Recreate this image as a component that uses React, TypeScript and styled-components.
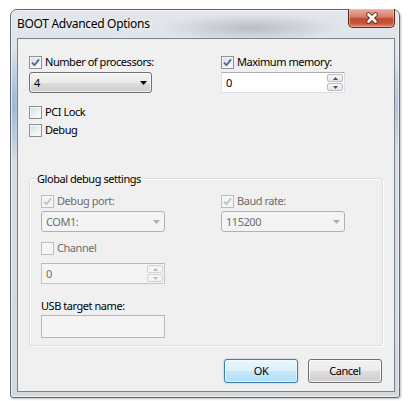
import React from "react";
import styled, { createGlobalStyle } from "styled-components";

const Global = createGlobalStyle`
  html, body { margin: 0; padding: 0; background: #ffffff; }
  body {
    font-family: "Noto Sans", "Open Sans", sans-serif;
    font-size: 11px;
    letter-spacing: -0.45px;
    color: #000;
  }
  #root { width: 417px; height: 401px; overflow: hidden; }
`;

const Window = styled.div`
  margin: 9px 0 0 10px;
  width: 390px;
  height: 389px;
  box-sizing: border-box;
  border: 1px solid #60676f;
  border-radius: 7px 7px 3px 3px;
  background:
    radial-gradient(ellipse 90px 14px at 62% 18px, rgba(110, 118, 128, 0.35), transparent 100%),
    radial-gradient(ellipse 8px 60px at 3px 95px, rgba(70, 130, 200, 0.45), transparent 100%),
    radial-gradient(ellipse 6px 50px at 386px 95px, rgba(90, 140, 200, 0.35), transparent 100%),
    linear-gradient(to bottom, #e2e6ea 0%, #d9dee3 40%, #d4d9de 100%);
  box-shadow: inset 0 0 0 1px rgba(255, 255, 255, 0.55), 1px 1px 2px rgba(0, 0, 0, 0.25);
  display: flex;
  flex-direction: column;
`;

const TitleBar = styled.div`
  height: 28px;
  display: flex;
  align-items: flex-start;
  padding-left: 6px;
  padding-right: 4px;
`;

const TitleText = styled.div`
  margin-top: 6px;
  font-size: 12px;
  line-height: 16px;
  letter-spacing: -0.3px;
  color: #000;
  text-shadow: 0 0 6px rgba(255, 255, 255, 0.9);
`;

const CloseButton = styled.div`
  margin-left: auto;
  margin-top: -1px;
  width: 47px;
  height: 19px;
  box-sizing: border-box;
  border: 1px solid #5a2a20;
  border-top: none;
  border-radius: 0 0 5px 5px;
  background: linear-gradient(
    to bottom,
    #e9ab9c 0%,
    #d9806b 42%,
    #c24a30 55%,
    #c9553a 80%,
    #de8a70 100%
  );
  box-shadow: inset 0 0 0 1px rgba(255, 210, 200, 0.45);
  display: flex;
  align-items: center;
  justify-content: center;
`;

const Client = styled.div`
  flex: 1;
  margin: 0 4px 5px 6px;
  border: 1px solid #7d838b;
  background: #f0f0f0;
  padding: 15px 11px 0 11px;
  display: flex;
  flex-direction: column;
`;

const Pair = styled.div<{ $first: number; $top?: number }>`
  display: grid;
  grid-template-columns: ${(p) => p.$first}px 124px;
  justify-items: start;
  row-gap: 2px;
  margin-top: ${(p) => p.$top ?? 0}px;
`;

const Stack = styled.div<{ $gap?: number; $top?: number }>`
  display: flex;
  flex-direction: column;
  align-items: flex-start;
  gap: ${(p) => p.$gap ?? 2}px;
  margin-top: ${(p) => p.$top ?? 0}px;
`;

const CheckRow = styled.div<{ $disabled?: boolean }>`
  height: 16px;
  display: flex;
  align-items: center;
  gap: 3px;
  line-height: 16px;
  color: ${(p) => (p.$disabled ? "#6d6d6d" : "#000")};
`;

const Box = styled.span<{ $disabled?: boolean }>`
  width: 13px;
  height: 13px;
  box-sizing: border-box;
  flex: none;
  border: 1px solid ${(p) => (p.$disabled ? "#bcbcbc" : "#8e8f8f")};
  background: ${(p) =>
    p.$disabled
      ? "#f4f4f4"
      : "linear-gradient(135deg, #d6dadf 0%, #eeeff1 55%, #fbfbfb 100%)"};
  box-shadow: inset 0 0 0 1px ${(p) => (p.$disabled ? "#f7f7f7" : "#f6f6f6")};
  display: flex;
  align-items: center;
  justify-content: center;
`;

const Combo = styled.div<{ $disabled?: boolean; $w?: number }>`
  width: ${(p) => p.$w ?? 124}px;
  height: 21px;
  box-sizing: border-box;
  border: 1px solid ${(p) => (p.$disabled ? "#adb2b5" : "#707070")};
  border-radius: 3px;
  background: ${(p) =>
    p.$disabled
      ? "#f4f4f4"
      : "linear-gradient(to bottom, #f2f2f2 0%, #ebebeb 50%, #dddddd 50%, #cfcfcf 100%)"};
  box-shadow: ${(p) => (p.$disabled ? "none" : "inset 0 0 0 1px rgba(255,255,255,0.7)")};
  color: ${(p) => (p.$disabled ? "#6d6d6d" : "#000")};
  display: flex;
  align-items: center;
  justify-content: space-between;
  padding: 0 4px 0 4px;
  line-height: 16px;
`;

const Spin = styled.div<{ $disabled?: boolean }>`
  width: 124px;
  height: 21px;
  box-sizing: border-box;
  border: 1px solid ${(p) => (p.$disabled ? "#c5c5c5" : "#dbdfe6")};
  border-top-color: ${(p) => (p.$disabled ? "#b9b9b9" : "#abadb3")};
  background: ${(p) => (p.$disabled ? "#f4f4f4" : "#ffffff")};
  color: ${(p) => (p.$disabled ? "#6d6d6d" : "#000")};
  display: flex;
  align-items: stretch;
  padding: 1px 1px 1px 4px;
  line-height: 17px;
`;

const SpinValue = styled.span`
  flex: 1;
  display: flex;
  align-items: center;
`;

const SpinButtons = styled.div`
  width: 16px;
  display: flex;
  flex-direction: column;
  gap: 1px;
`;

const SpinButton = styled.div<{ $disabled?: boolean }>`
  flex: 1;
  box-sizing: border-box;
  border: 1px solid ${(p) => (p.$disabled ? "#d2d2d2" : "#b8bcc2")};
  border-radius: 2px;
  background: ${(p) =>
    p.$disabled ? "#f4f4f4" : "linear-gradient(to bottom, #f7f7f7 0%, #e6e6e6 100%)"};
  display: flex;
  align-items: center;
  justify-content: center;
`;

const TextBox = styled.div`
  width: 124px;
  height: 23px;
  box-sizing: border-box;
  border: 1px solid #b5b9bc;
  background: #f4f4f4;
`;

const GroupBox = styled.div`
  margin-top: 40px;
  border: 1px solid #d5dfe5;
  border-radius: 3px;
  box-shadow: inset 1px 1px 0 #ffffff, 1px 1px 0 #ffffff;
  padding: 0 11px 7px 11px;
  display: flex;
  flex-direction: column;
`;

const GroupTitle = styled.div`
  align-self: flex-start;
  margin: -8px 0 0 -6px;
  padding: 0 2px;
  background: #f0f0f0;
  line-height: 15px;
`;

const PlainLabel = styled.div<{ $top: number }>`
  margin-top: ${(p) => p.$top}px;
  line-height: 15px;
`;

const ButtonRow = styled.div`
  margin-top: 13px;
  margin-right: 1px;
  display: flex;
  justify-content: flex-end;
  gap: 10px;
`;

const Button = styled.div<{ $default?: boolean }>`
  width: 74px;
  height: 24px;
  box-sizing: border-box;
  border: 1px solid ${(p) => (p.$default ? "#3c7fb1" : "#707070")};
  border-radius: 3px;
  background: ${(p) =>
    p.$default
      ? "linear-gradient(to bottom, #eaf6fd 0%, #d9f0fc 50%, #c6e8fa 50%, #b4def5 100%)"
      : "linear-gradient(to bottom, #f2f2f2 0%, #ebebeb 50%, #dddddd 50%, #cfcfcf 100%)"};
  box-shadow: ${(p) =>
    p.$default
      ? "inset 0 0 0 1px rgba(255,255,255,0.6), 0 0 2px rgba(60,127,177,0.5)"
      : "inset 0 0 0 1px rgba(255,255,255,0.7)"};
  display: flex;
  align-items: center;
  justify-content: center;
  line-height: 16px;
`;

const Check: React.FC<{ checked?: boolean; disabled?: boolean }> = ({ checked, disabled }) => (
  <Box $disabled={disabled}>
    {checked && (
      <svg width="9" height="9" viewBox="0 0 9 9">
        <path
          d="M1 4.6 L3.4 7.2 L8 1.4"
          fill="none"
          stroke={disabled ? "#c3c3c3" : "#4f6596"}
          strokeWidth="1.8"
          strokeLinejoin="round"
        />
      </svg>
    )}
  </Box>
);

const ComboArrow: React.FC<{ disabled?: boolean }> = ({ disabled }) => (
  <svg width="7" height="4" viewBox="0 0 7 4">
    <polygon points="0,0 7,0 3.5,4" fill={disabled ? "#adadad" : "#000"} />
  </svg>
);

const SpinArrow: React.FC<{ up?: boolean; disabled?: boolean }> = ({ up, disabled }) => (
  <svg width="5" height="3" viewBox="0 0 5 3">
    <polygon
      points={up ? "0,3 5,3 2.5,0" : "0,0 5,0 2.5,3"}
      fill={disabled ? "#b8b8b8" : "#4d4d4d"}
    />
  </svg>
);

const CloseGlyph = () => (
  <svg width="14" height="12" viewBox="0 0 14 12">
    <path d="M3.5 2.5 L10.5 9.5 M10.5 2.5 L3.5 9.5" stroke="#5b2418" strokeWidth="4.6" strokeLinecap="round" opacity="0.75" />
    <path d="M3.5 2.5 L10.5 9.5 M10.5 2.5 L3.5 9.5" stroke="#ffffff" strokeWidth="2.6" strokeLinecap="round" />
  </svg>
);

const SpinField: React.FC<{ value: string; disabled?: boolean }> = ({ value, disabled }) => (
  <Spin $disabled={disabled}>
    <SpinValue>{value}</SpinValue>
    <SpinButtons>
      <SpinButton $disabled={disabled}>
        <SpinArrow up disabled={disabled} />
      </SpinButton>
      <SpinButton $disabled={disabled}>
        <SpinArrow disabled={disabled} />
      </SpinButton>
    </SpinButtons>
  </Spin>
);

export default function App() {
  return (
    <>
      <Global />
      <Window>
        <TitleBar>
          <TitleText>BOOT Advanced Options</TitleText>
          <CloseButton>
            <CloseGlyph />
          </CloseButton>
        </TitleBar>
        <Client>
          <Pair $first={192}>
            <CheckRow>
              <Check checked />
              Number of processors:
            </CheckRow>
            <CheckRow>
              <Check checked />
              Maximum memory:
            </CheckRow>
            <Combo $w={123}>
              <span>4</span>
              <ComboArrow />
            </Combo>
            <SpinField value="0" />
          </Pair>

          <Stack $top={11}>
            <CheckRow>
              <Check />
              PCI Lock
            </CheckRow>
            <CheckRow>
              <Check />
              Debug
            </CheckRow>
          </Stack>

          <GroupBox>
            <GroupTitle>Global debug settings</GroupTitle>
            <Pair $first={180} $top={7}>
              <CheckRow $disabled>
                <Check checked disabled />
                Debug port:
              </CheckRow>
              <CheckRow $disabled>
                <Check checked disabled />
                Baud rate:
              </CheckRow>
              <Combo $disabled>
                <span>COM1:</span>
                <ComboArrow disabled />
              </Combo>
              <Combo $disabled>
                <span>115200</span>
                <ComboArrow disabled />
              </Combo>
            </Pair>
            <Stack $gap={7} $top={8}>
              <CheckRow $disabled>
                <Check disabled />
                Channel
              </CheckRow>
              <SpinField value="0" disabled />
            </Stack>
            <Stack>
              <PlainLabel $top={14}>USB target name:</PlainLabel>
              <TextBox />
            </Stack>
          </GroupBox>

          <ButtonRow>
            <Button $default>OK</Button>
            <Button>Cancel</Button>
          </ButtonRow>
        </Client>
      </Window>
    </>
  );
}
